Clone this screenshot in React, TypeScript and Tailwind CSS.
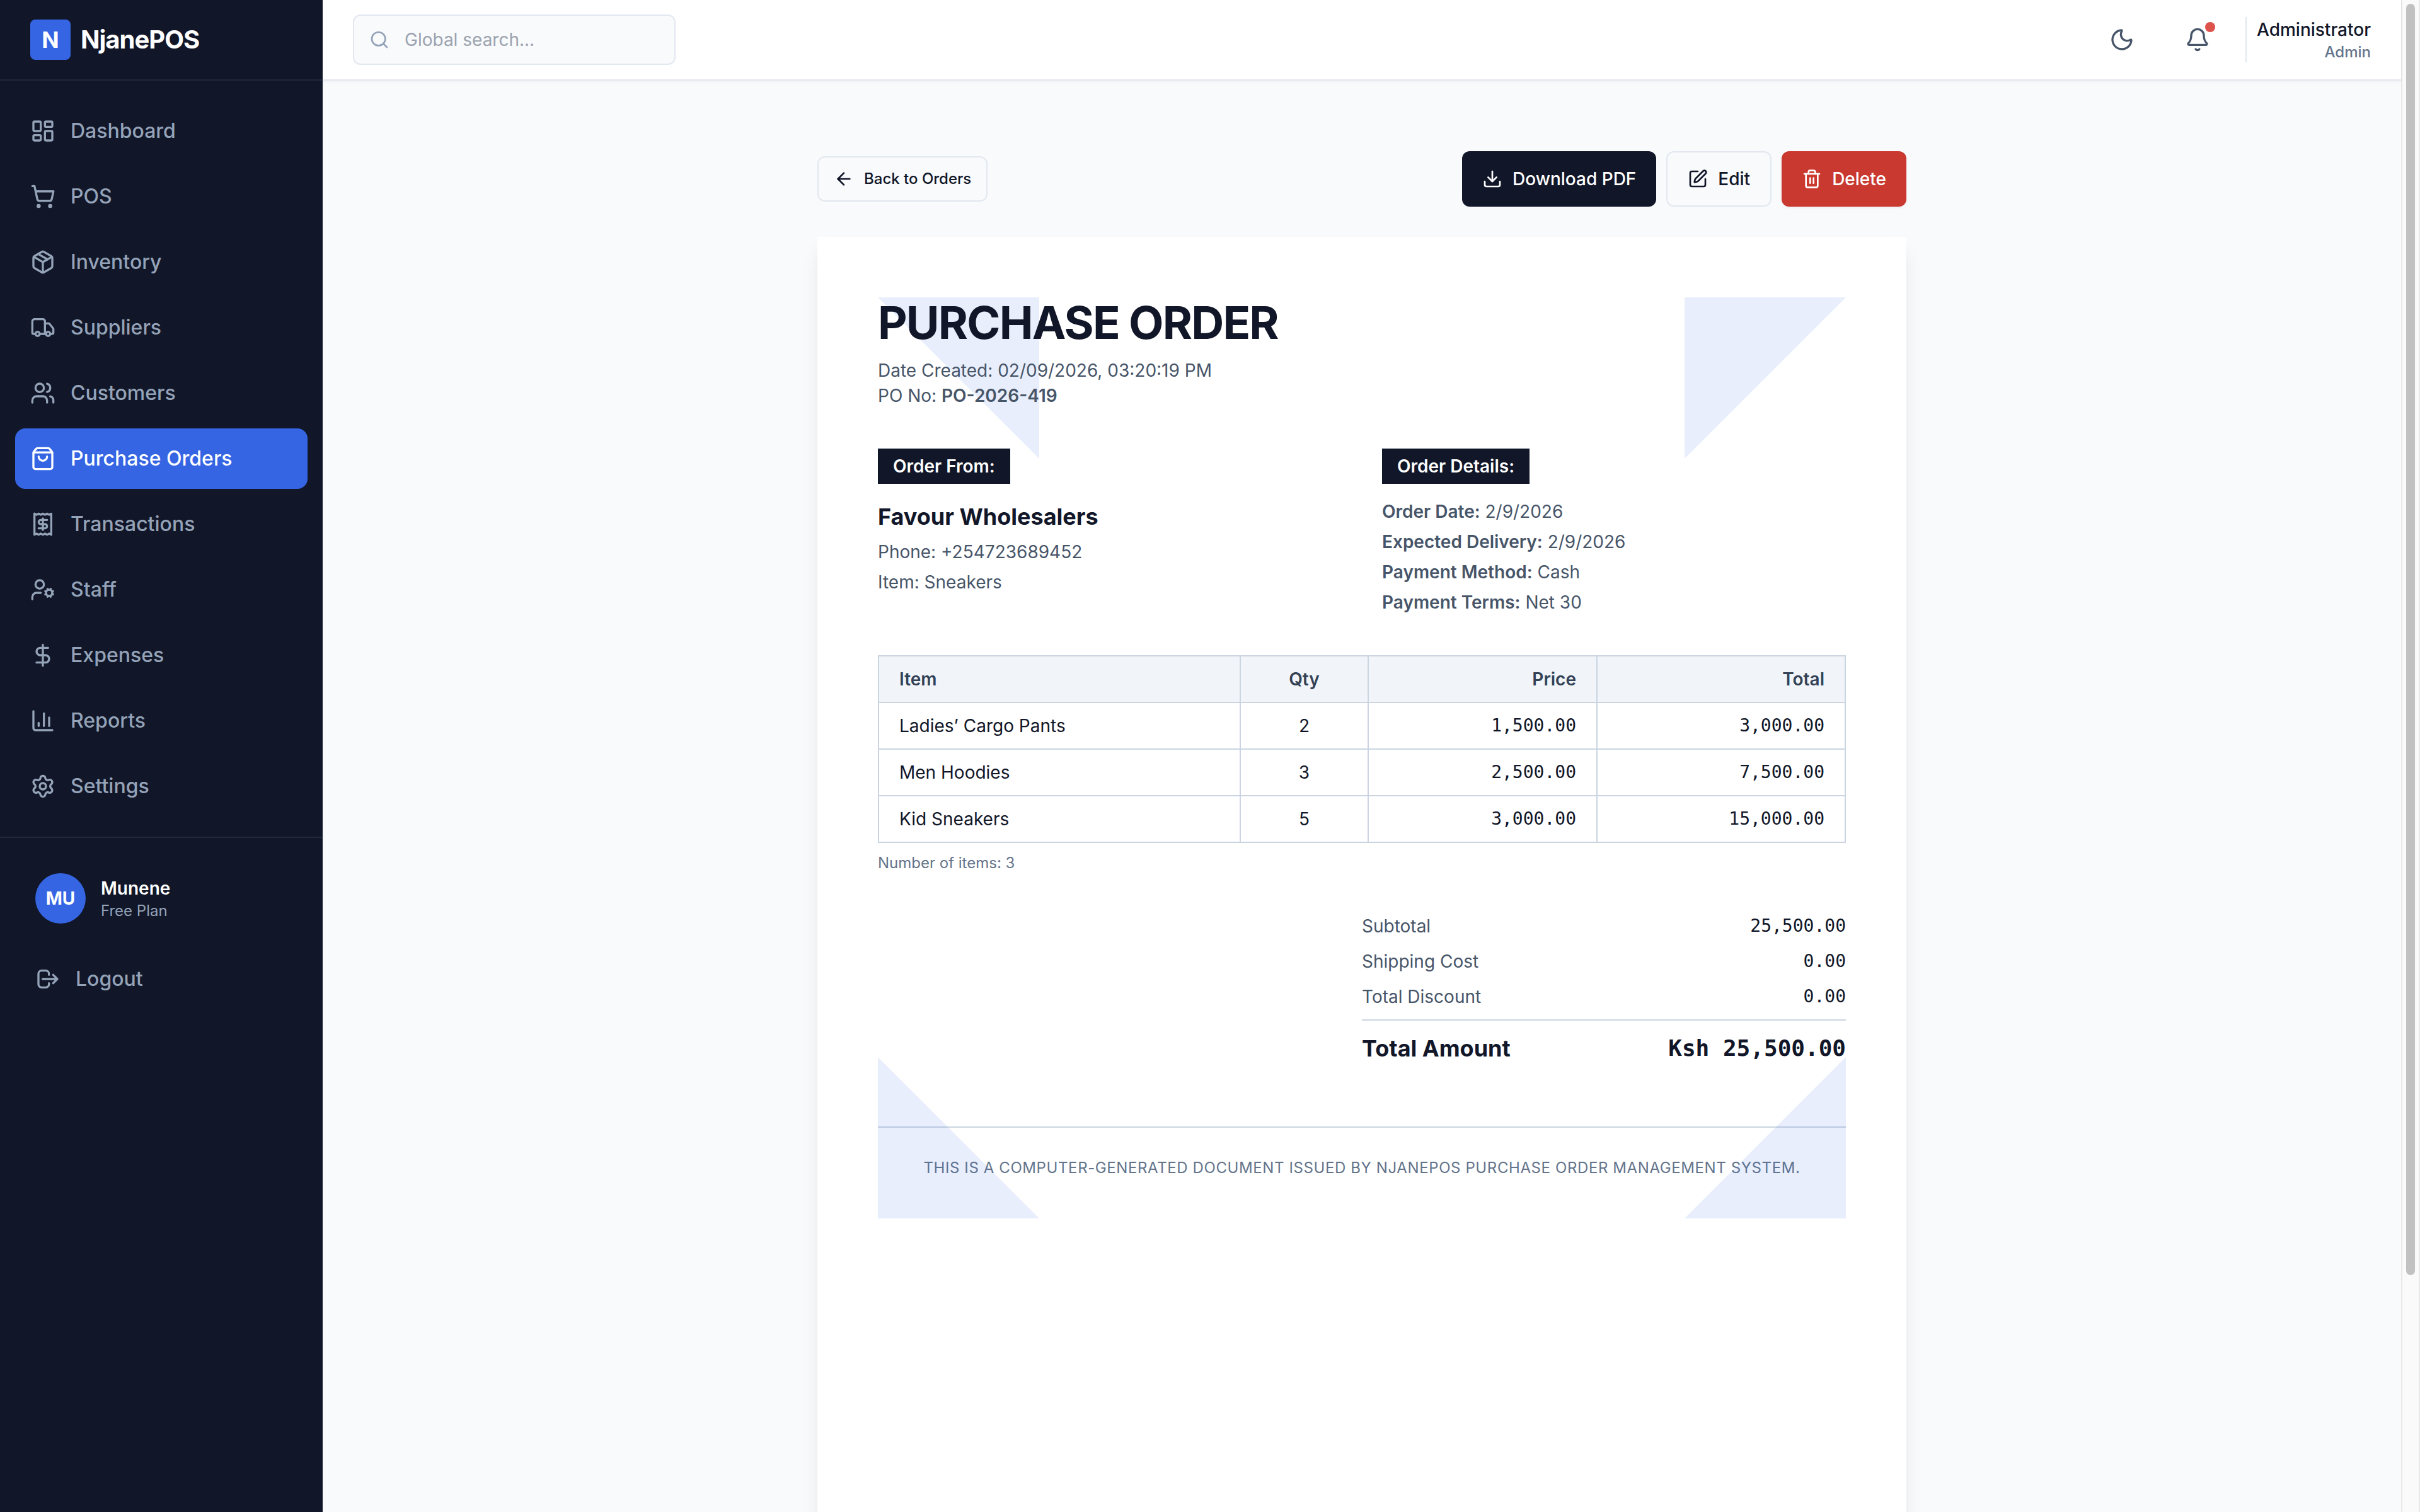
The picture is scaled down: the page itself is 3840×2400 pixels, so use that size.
import type { ReactNode } from "react";
import {
  ArrowLeft,
  Bell,
  ChartColumn,
  DollarSign,
  Download,
  LayoutDashboard,
  Moon,
  Package,
  Receipt,
  Search,
  Settings,
  ShoppingBag,
  ShoppingCart,
  SquarePen,
  Trash2,
  Truck,
  UserCog,
  Users,
  type LucideIcon,
} from "lucide-react";

const navItems: { label: string; icon: LucideIcon; active?: boolean }[] = [
  { label: "Dashboard", icon: LayoutDashboard },
  { label: "POS", icon: ShoppingCart },
  { label: "Inventory", icon: Package },
  { label: "Suppliers", icon: Truck },
  { label: "Customers", icon: Users },
  { label: "Purchase Orders", icon: ShoppingBag, active: true },
  { label: "Transactions", icon: Receipt },
  { label: "Staff", icon: UserCog },
  { label: "Expenses", icon: DollarSign },
  { label: "Reports", icon: ChartColumn },
  { label: "Settings", icon: Settings },
];

const orderDetails = [
  { label: "Order Date:", value: "2/9/2026" },
  { label: "Expected Delivery:", value: "2/9/2026" },
  { label: "Payment Method:", value: "Cash" },
  { label: "Payment Terms:", value: "Net 30" },
];

const items = [
  { name: "Ladies’ Cargo Pants", qty: 2, price: "1,500.00", total: "3,000.00" },
  { name: "Men Hoodies", qty: 3, price: "2,500.00", total: "7,500.00" },
  { name: "Kid Sneakers", qty: 5, price: "3,000.00", total: "15,000.00" },
];

const totals = [
  { label: "Subtotal", value: "25,500.00" },
  { label: "Shipping Cost", value: "0.00" },
  { label: "Total Discount", value: "0.00" },
];

function LogoutIcon() {
  return (
    <svg
      className="size-10 shrink-0"
      viewBox="0 0 24 24"
      fill="none"
      stroke="currentColor"
      strokeWidth={2}
      strokeLinecap="round"
      strokeLinejoin="round"
      aria-hidden="true"
    >
      <path d="M17 16l4-4m0 0l-4-4m4 4H7m6 4v1a3 3 0 01-3 3H6a3 3 0 01-3-3V7a3 3 0 013-3h4a3 3 0 013 3v1" />
    </svg>
  );
}

function Sidebar() {
  return (
    <aside className="flex w-[512px] shrink-0 flex-col bg-[#111628] text-[#94a3b8]">
      <div className="flex h-32 items-center gap-4 border-b-2 border-[#1e293b] px-12">
        <div className="flex size-16 items-center justify-center rounded-lg bg-[#3565e3] text-[36px] font-bold text-white">
          N
        </div>
        <span className="text-[40px] font-bold tracking-tight text-white">NjanePOS</span>
      </div>
      <nav className="flex flex-col gap-2 px-6 py-8">
        {navItems.map(({ label, icon: Icon, active }) => (
          <a
            key={label}
            href="#"
            aria-current={active ? "page" : undefined}
            className={
              active
                ? "flex h-24 items-center gap-6 rounded-2xl bg-[#3565e3] px-6 text-[32px] font-medium text-white"
                : "flex h-24 items-center gap-6 rounded-2xl px-6 text-[32px] font-medium"
            }
          >
            <Icon className="size-10 shrink-0" />
            {label}
          </a>
        ))}
      </nav>
      <div className="flex flex-col gap-4 border-t-2 border-[#1e293b] p-8">
        <div className="flex items-center gap-6 p-6">
          <div className="flex size-20 items-center justify-center rounded-full bg-[#3565e3] text-[28px] font-bold text-white">
            MU
          </div>
          <div>
            <p className="text-[28px] leading-10 font-semibold text-white">Munene</p>
            <p className="text-[24px] leading-8">Free Plan</p>
          </div>
        </div>
        <button type="button" className="flex h-24 items-center gap-6 px-6 text-[32px] font-medium">
          <LogoutIcon />
          Logout
        </button>
      </div>
    </aside>
  );
}

function TopBar() {
  return (
    <header className="relative flex h-32 shrink-0 items-center justify-between border-b-2 border-[#e2e8f0] bg-white px-12 shadow-[0_2px_4px_rgba(0,0,0,0.05)]">
      <label className="flex h-20 w-[512px] items-center gap-6 rounded-xl border-2 border-[#e2e8f0] bg-[#f8fafc] px-6">
        <Search className="size-8 shrink-0 text-[#94a3b8]" />
        <input
          type="search"
          aria-label="Global search"
          placeholder="Global search..."
          className="min-w-0 flex-1 bg-transparent text-[28px] text-[#111628] outline-none placeholder:text-[#9ca3af]"
        />
      </label>
      <div className="flex items-center gap-8 text-[#475569]">
        <button type="button" aria-label="Toggle dark mode" className="p-6">
          <Moon className="size-10" />
        </button>
        <button type="button" aria-label="Notifications" className="relative p-6">
          <Bell className="size-10" />
          <span className="absolute top-4 right-4 size-4 rounded-full bg-[#de524c]" />
        </button>
        <div className="border-l-2 border-[#e2e8f0] pl-4 text-right">
          <p className="text-[28px] leading-10 font-medium text-[#111628]">Administrator</p>
          <p className="text-[24px] leading-8 font-medium text-[#64748b]">Admin</p>
        </div>
      </div>
    </header>
  );
}

function Tag({ children }: { children: ReactNode }) {
  return (
    <h2 className="w-fit bg-[#111628] px-6 py-2 text-[28px] leading-10 font-semibold text-white">{children}</h2>
  );
}

function Corner({ points, place }: { points: string; place: string }) {
  return (
    <svg className={`pointer-events-none absolute size-64 ${place}`} viewBox="0 0 256 256" aria-hidden="true">
      <polygon points={points} fill="#2e66df" fillOpacity={0.11} />
    </svg>
  );
}

function ItemsTable() {
  return (
    <table className="w-full border-collapse text-[28px] leading-10">
      <thead>
        <tr className="bg-[#f1f5f9] text-[#334155]">
          <th className="w-[574px] border-2 border-[#cbd5e1] px-8 py-4 text-left font-semibold">Item</th>
          <th className="w-[203px] border-2 border-[#cbd5e1] px-8 py-4 text-center font-semibold">Qty</th>
          <th className="w-[363px] border-2 border-[#cbd5e1] px-8 py-4 text-right font-semibold">Price</th>
          <th className="border-2 border-[#cbd5e1] px-8 py-4 text-right font-semibold">Total</th>
        </tr>
      </thead>
      <tbody>
        {items.map((item) => (
          <tr key={item.name}>
            <td className="border-2 border-[#cbd5e1] px-8 py-4">{item.name}</td>
            <td className="border-2 border-[#cbd5e1] px-8 py-4 text-center">{item.qty}</td>
            <td className="border-2 border-[#cbd5e1] px-8 py-4 text-right font-['DejaVu_Sans_Mono',monospace]">
              {item.price}
            </td>
            <td className="border-2 border-[#cbd5e1] px-8 py-4 text-right font-['DejaVu_Sans_Mono',monospace]">
              {item.total}
            </td>
          </tr>
        ))}
      </tbody>
    </table>
  );
}

function PurchaseOrder() {
  return (
    <article className="min-h-[2246px] bg-white p-24 shadow-[0_20px_30px_-6px_rgba(0,0,0,0.1),0_8px_12px_-8px_rgba(0,0,0,0.1)]">
      <div className="relative flex flex-col gap-16 pb-16">
        <div className="relative z-10">
          <h1 className="text-[72px] leading-20 font-bold tracking-tight">PURCHASE ORDER</h1>
          <p className="mt-4 text-[28px] leading-10 text-[#475569]">Date Created: 02/09/2026, 03:20:19 PM</p>
          <p className="text-[28px] leading-10 text-[#475569]">
            PO No: <span className="font-semibold">PO-2026-419</span>
          </p>
        </div>

        <div className="grid grid-cols-2 gap-16 text-[28px] leading-10 text-[#475569]">
          <section>
            <Tag>Order From:</Tag>
            <h3 className="mt-6 text-[36px] leading-14 font-bold text-[#111628]">Favour Wholesalers</h3>
            <div className="mt-2 flex flex-col gap-2">
              <p>Phone: +254723689452</p>
              <p>Item: Sneakers</p>
            </div>
          </section>
          <section>
            <Tag>Order Details:</Tag>
            <div className="mt-6 flex flex-col gap-2">
              {orderDetails.map((detail) => (
                <p key={detail.label}>
                  <span className="font-semibold">{detail.label}</span> {detail.value}
                </p>
              ))}
            </div>
          </section>
        </div>

        <div>
          <ItemsTable />
          <p className="mt-4 text-[24px] leading-8 text-[#64748b]">Number of items: 3</p>
        </div>

        <div className="flex w-1/2 flex-col gap-4 self-end">
          {totals.map((row) => (
            <div key={row.label} className="flex justify-between text-[28px] leading-10">
              <span className="text-[#475569]">{row.label}</span>
              <span className="font-['DejaVu_Sans_Mono',monospace]">{row.value}</span>
            </div>
          ))}
          <div className="flex justify-between border-t-2 border-[#cbd5e1] pt-4 text-[36px] leading-14 font-bold">
            <span>Total Amount</span>
            <span className="font-['DejaVu_Sans_Mono',monospace]">Ksh 25,500.00</span>
          </div>
        </div>

        <p className="mt-8 border-t-2 border-[#cbd5e1] pt-12 text-center text-[24px] leading-8 tracking-wide text-[#64748b] uppercase">
          This is a computer-generated document issued by NjanePOS Purchase Order Management System.
        </p>

        <Corner place="top-0 left-0" points="0,0 256,0 256,256" />
        <Corner place="top-0 right-0" points="0,0 256,0 0,256" />
        <Corner place="bottom-0 left-0" points="0,0 0,256 256,256" />
        <Corner place="right-0 bottom-0" points="256,0 256,256 0,256" />
      </div>
    </article>
  );
}

function Scrollbar() {
  return (
    <div className="w-[30px] shrink-0 border-x-2 border-[#e8e8e8] bg-[#fafafa] px-[6px] py-[6px]" aria-hidden="true">
      <div className="h-[84.5%] w-full rounded-full bg-[#c1c1c1]" />
    </div>
  );
}

export default function App() {
  return (
    <div className="flex h-screen overflow-hidden bg-[#f8fafc] font-['Inter',sans-serif] text-[#111628]">
      <Sidebar />
      <div className="flex min-w-0 flex-1 flex-col">
        <TopBar />
        <main className="min-h-0 flex-1 overflow-hidden p-12">
          <div className="mx-auto flex max-w-[1792px] flex-col gap-12 px-8 py-16">
            <div className="flex items-center justify-between font-medium">
              <button
                type="button"
                className="flex h-18 items-center gap-4 rounded-xl border-2 border-[#e2e8f0] px-6 text-[24px]"
              >
                <ArrowLeft className="size-8" />
                Back to Orders
              </button>
              <div className="flex gap-4 text-[28px]">
                <button type="button" className="flex h-22 items-center gap-4 rounded-xl bg-[#111628] px-8 text-white">
                  <Download className="size-8" />
                  Download PDF
                </button>
                <button type="button" className="flex h-22 items-center gap-4 rounded-xl border-2 border-[#e2e8f0] px-8">
                  <SquarePen className="size-8" />
                  Edit
                </button>
                <button
                  type="button"
                  className="flex h-22 items-center gap-4 rounded-xl bg-[#c9392f] px-8 text-white shadow-[0_2px_4px_rgba(0,0,0,0.05)]"
                >
                  <Trash2 className="size-8" />
                  Delete
                </button>
              </div>
            </div>
            <PurchaseOrder />
          </div>
        </main>
      </div>
      <Scrollbar />
    </div>
  );
}
